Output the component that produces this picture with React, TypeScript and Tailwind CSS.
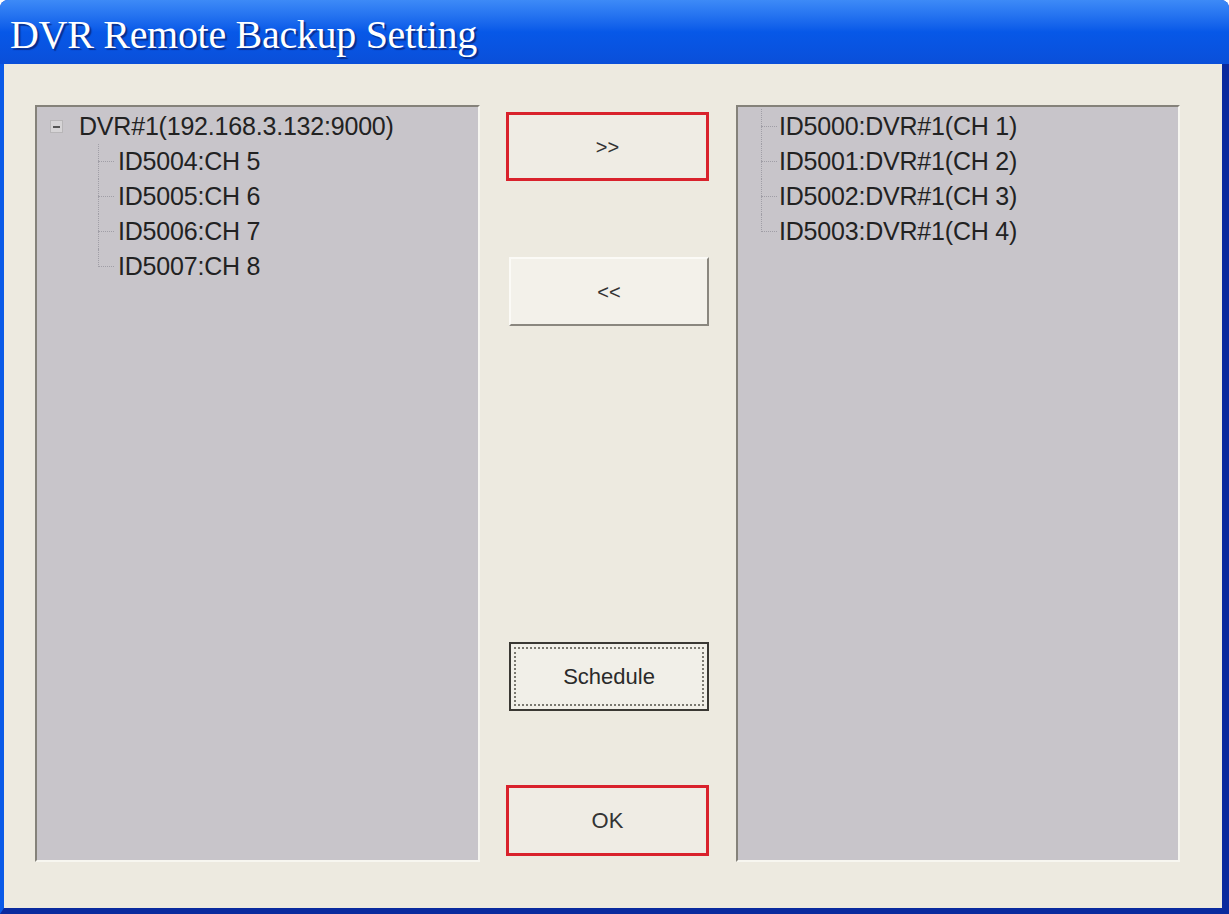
import React from 'react';

interface TreeItem {
  id: string;
  label: string;
}

const leftItems: TreeItem[] = [
  { id: '5004', label: 'ID5004:CH 5' },
  { id: '5005', label: 'ID5005:CH 6' },
  { id: '5006', label: 'ID5006:CH 7' },
  { id: '5007', label: 'ID5007:CH 8' },
];

const rightItems: TreeItem[] = [
  { id: '5000', label: 'ID5000:DVR#1(CH 1)' },
  { id: '5001', label: 'ID5001:DVR#1(CH 2)' },
  { id: '5002', label: 'ID5002:DVR#1(CH 3)' },
  { id: '5003', label: 'ID5003:DVR#1(CH 4)' },
];

const font = { fontFamily: '"Liberation Sans", Arial, sans-serif' };

const TreeRow: React.FC<{ label: string; last?: boolean; lineLeft: string }> = ({ label, last, lineLeft }) => (
  <div className="relative h-[35px] flex items-center">
    {/* vertical dotted connector */}
    <span
      className={`absolute top-0 border-l border-dotted border-[#a09ea6] ${lineLeft} ${last ? 'h-[18px]' : 'h-[35px]'}`}
    />
    <span className={`absolute top-[17px] w-[16px] border-t border-dotted border-[#a09ea6] ${lineLeft}`} />
    <span className="text-[25px] leading-none text-[#222] tracking-[-0.2px]">{label}</span>
  </div>
);

const App: React.FC = () => {
  return (
    <div className="w-[1229px] h-[914px] bg-[#0b3fd0] rounded-t-[8px] overflow-hidden flex flex-col" style={font}>
      {/* Title bar */}
      <div className="h-16 shrink-0 bg-gradient-to-b from-[#3d8af7] via-[#0758e8] to-[#0a4fd9] flex items-center pl-[10px]">
        <span
          className="text-white text-[40px] leading-none pt-[5px] tracking-[-0.3px] [text-shadow:2px_2px_1px_#0a2e8c]"
          style={{ fontFamily: '"Liberation Serif", "Times New Roman", serif' }}
        >
          DVR Remote Backup Setting
        </span>
      </div>

      {/* Body */}
      <div className="flex-1 border-l-4 border-l-[#0a5ae8] border-r-[7px] border-r-[#0a2a9e] border-b-[6px] border-b-[#0a2a9e] bg-[#edeae0] pl-[31px] pr-[42px] pt-[41px] pb-[46px]">
        <div className="h-full grid grid-cols-[445px_1fr_444px] gap-x-[26px]">
          {/* Left panel */}
          <div className="bg-[#c8c5ca] border-2 border-t-[#85827a] border-l-[#85827a] border-b-[#f7f6f0] border-r-[#f7f6f0] pt-[2px] pl-[13px]">
            <div className="h-[35px] flex items-center">
              <span className="w-[13px] h-[13px] border border-[#b8b6b8] bg-[#d6d4d6] flex items-center justify-center mr-[16px]">
                <span className="w-[7px] h-[2px] bg-[#555]" />
              </span>
              <span className="text-[25px] leading-none text-[#222] tracking-[-0.2px]">DVR#1(192.168.3.132:9000)</span>
            </div>
            <div className="pl-[68px]">
              {leftItems.map((item, i) => (
                <TreeRow key={item.id} label={item.label} last={i === leftItems.length - 1} lineLeft="left-[-20px]" />
              ))}
            </div>
          </div>

          {/* Buttons */}
          <div className="flex flex-col pb-[6px] text-[20px] text-[#333]">
            <button className="mt-[7px] h-[69px] w-[203px] border-[3px] border-[#d9222c] bg-[#efece4]">&gt;&gt;</button>
            <button className="mt-[76px] h-[69px] w-[200px] ml-[3px] bg-[#f3f1ea] border-2 border-t-[#fbfaf6] border-l-[#fbfaf6] border-b-[#8a877f] border-r-[#8a877f]">
              &lt;&lt;
            </button>
            <div className="flex-1" />
            <button className="h-[69px] w-[200px] ml-[3px] bg-[#f1efe8] border-2 border-[#3a3833] p-[3px]">
              <span className="w-full h-full flex items-center justify-center border-2 border-dotted border-[#7a7870] text-[22px] text-[#2a2a2a]">
                Schedule
              </span>
            </button>
            <button className="mt-[74px] h-[71px] w-[203px] border-[3px] border-[#d9222c] bg-[#efece4] text-[22px]">OK</button>
          </div>

          {/* Right panel */}
          <div className="bg-[#c8c5ca] border-2 border-t-[#85827a] border-l-[#85827a] border-b-[#f7f6f0] border-r-[#f7f6f0] pt-[2px] pl-[41px]">
            {rightItems.map((item, i) => (
              <TreeRow key={item.id} label={item.label} last={i === rightItems.length - 1} lineLeft="left-[-18px]" />
            ))}
          </div>
        </div>
      </div>
    </div>
  );
};

export default App;
